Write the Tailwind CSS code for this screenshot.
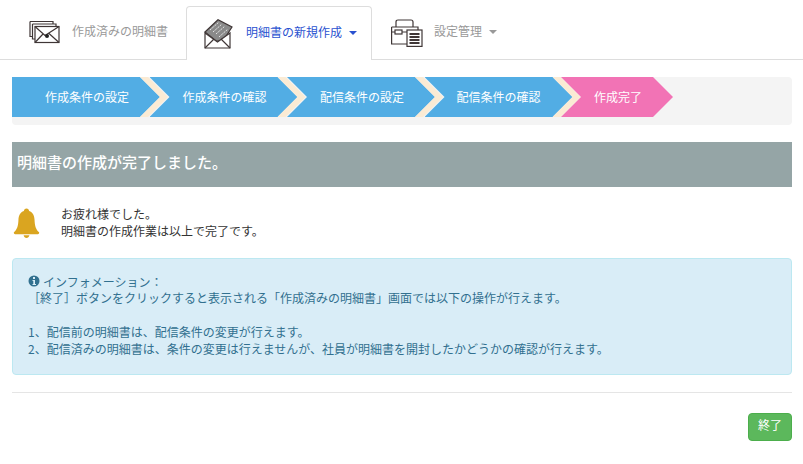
<!DOCTYPE html>
<html lang="ja">
<head>
    <meta charset="UTF-8">
    <title>明細書の新規作成</title>
    <script src="https://cdn.jsdelivr.net/npm/@tailwindcss/browser@4"></script>
</head>
<body class="bg-white text-xs text-[#333] font-['Noto_Sans_CJK_JP','Liberation_Sans',sans-serif]">
    <!-- Tabs -->
    <nav class="flex h-[60px] pl-3 pt-1.5 border-b border-[#ddd]">
        <a href="#" class="flex items-center w-[174px] pl-[17px] pb-1 text-[#999]">
            <svg class="w-[32px] h-[26px] mr-[11px] mt-1" viewBox="0 0 32 26" fill="none" stroke="#3f3636" stroke-width="1.2">
                <path d="M1 1.5H24V4M1 1.5V16.5H3.5"/>
                <path d="M3.5 4H27V6.5M3.5 4V19H6"/>
                <rect x="6" y="6.5" width="24" height="16" fill="#fff"/>
                <path d="M6 6.5L16 15.5 30 6.5M6 22.5L14 14M30 22.5L20 13.5"/>
                <circle cx="18" cy="16" r="2" fill="#222" stroke="none"/>
            </svg>
            作成済みの明細書
        </a>
        <a href="#" class="flex items-center w-[186px] h-[54px] -mb-px pl-[16px] pb-1 bg-white border border-b-0 border-[#ddd] rounded-t text-[#2a52d0]">
            <svg class="w-[30px] h-[30px] mr-[13px] mt-1" viewBox="0 0 30 30" fill="none" stroke="#3f3636" stroke-width="1.2">
                <path d="M2 13L15 0.7 29 8 20 22 13 22Z" fill="#8a8a8a"/>
                <path d="M7 11L16 3M10 13L19 5M13 15L22 7M16 18L25 10" stroke="#e8e8e8" stroke-width="1" stroke-dasharray="2 1"/>
                <path d="M2 14L14.5 23 27 14V29H2Z" fill="#fff"/>
                <path d="M2 29L11 20M27 29L18 20"/>
            </svg>
            明細書の新規作成
            <span class="ml-[7px] mt-0.5 border-x-4 border-x-transparent border-t-4 border-t-[#2a52d0]"></span>
        </a>
        <a href="#" class="flex items-center pl-[19px] pb-1 text-[#999]">
            <svg class="w-[32px] h-[28px] mr-[11px] mt-1" viewBox="0 0 32 28" fill="none" stroke="#3f3636" stroke-width="1.2">
                <path d="M5 8V3Q5 1 7 1H20Q22 1 22 3V8"/>
                <path d="M0.6 8H27V11M16 25H0.6V8"/>
                <path d="M0.6 13H4M11 13H16"/>
                <rect x="4" y="11" width="7" height="4"/>
                <rect x="16" y="11" width="15" height="16.4" fill="#fff"/>
                <path d="M18.5 15H28.5M18.5 18H28.5M18.5 21H28.5M18.5 24H28.5" stroke-width="1.8"/>
            </svg>
            設定管理
            <span class="ml-[7px] mt-0.5 border-x-4 border-x-transparent border-t-4 border-t-[#999]"></span>
        </a>
    </nav>

    <main class="pl-3 pr-[11px]">
        <!-- Steps -->
        <div class="flex h-12 mt-[17px] bg-[#f4f4f4] rounded text-white">
            <div class="relative w-[148px] h-10 shrink-0">
                <div class="flex items-center justify-center h-full pl-0.5 bg-[#52ade4] [clip-path:polygon(0_0,128px_0,148px_50%,128px_100%,0_100%)]">作成条件の設定</div>
                <span class="absolute top-0 left-[128px] w-7 h-10 bg-[#fbebd4] [clip-path:polygon(0_0,8px_0,28px_50%,8px_100%,0_100%,20px_50%)]"></span>
            </div>
            <div class="relative w-[148px] h-10 shrink-0 -ml-[10.5px]">
                <div class="flex items-center justify-center h-full pl-0.5 bg-[#52ade4] [clip-path:polygon(0_0,128px_0,148px_50%,128px_100%,0_100%,20px_50%)]">作成条件の確認</div>
                <span class="absolute top-0 left-[128px] w-7 h-10 bg-[#fbebd4] [clip-path:polygon(0_0,8px_0,28px_50%,8px_100%,0_100%,20px_50%)]"></span>
            </div>
            <div class="relative w-[148px] h-10 shrink-0 -ml-[10.5px]">
                <div class="flex items-center justify-center h-full pl-0.5 bg-[#52ade4] [clip-path:polygon(0_0,128px_0,148px_50%,128px_100%,0_100%,20px_50%)]">配信条件の設定</div>
                <span class="absolute top-0 left-[128px] w-7 h-10 bg-[#fbebd4] [clip-path:polygon(0_0,8px_0,28px_50%,8px_100%,0_100%,20px_50%)]"></span>
            </div>
            <div class="relative w-[148px] h-10 shrink-0 -ml-[10.5px]">
                <div class="flex items-center justify-center h-full bg-[#52ade4] [clip-path:polygon(0_0,128px_0,148px_50%,128px_100%,0_100%,20px_50%)]">配信条件の確認</div>
                <span class="absolute top-0 left-[128px] w-7 h-10 bg-[#fbebd4] [clip-path:polygon(0_0,8px_0,28px_50%,8px_100%,0_100%,20px_50%)]"></span>
            </div>
            <div class="flex items-center justify-center w-[112px] h-10 shrink-0 -ml-[11.5px] pl-0.5 bg-[#f273b5] [clip-path:polygon(0_0,92px_0,112px_50%,92px_100%,0_100%,20px_50%)]">作成完了</div>
        </div>

        <!-- Heading -->
        <h2 class="flex items-center h-[45px] mt-[17px] pl-[5px] pb-1.5 bg-[#95a5a6] text-white text-[15px] font-medium leading-none">明細書の作成が完了しました。</h2>

        <!-- Message -->
        <div class="flex items-center mt-[18px] pl-px">
            <svg class="w-[27px] h-[31px] mr-[21px] mt-0.5" viewBox="0 0 27 32" fill="#daa520">
                <path d="M13.5 0.5C11.8 0.5 11 1.6 10.8 3 7 4.3 5.4 7.8 5.2 12 5 18 4 22 0.5 25 0 26.2 1 27 3 27.2H24C26 27 27 26.2 26.5 25 23 22 22 18 21.8 12 21.6 7.8 20 4.3 16.2 3 16 1.6 15.2 0.5 13.5 0.5Z"/>
                <path d="M10.5 28.2H16.5C16 30 15 31 13.5 31S11 30 10.5 28.2Z"/>
            </svg>
            <p class="leading-[17px]">お疲れ様でした。<br>明細書の作成作業は以上で完了です。</p>
        </div>

        <!-- Information -->
        <div class="h-[117px] mt-[19px] pt-[14px] pl-[15px] bg-[#d9edf7] border border-[#bce8f1] rounded text-[#31708f] leading-[17px]">
            <p class="flex items-center h-4">
                <svg class="w-3 h-3 mr-[3px]" viewBox="0 0 12 12">
                    <circle cx="6" cy="6" r="5.5" fill="#31708f"/>
                    <rect x="5" y="2" width="2" height="2" fill="#d9edf7"/>
                    <path d="M4.5 5H7V9H8V10H4.5V9H5.3V6H4.5Z" fill="#d9edf7"/>
                </svg>
                インフォメーション：
            </p>
            <p>［終了］ボタンをクリックすると表示される「作成済みの明細書」画面では以下の操作が行えます。</p>
            <p class="mt-[17px]">1、配信前の明細書は、配信条件の変更が行えます。</p>
            <p>2、配信済みの明細書は、条件の変更は行えませんが、社員が明細書を開封したかどうかの確認が行えます。</p>
        </div>

        <hr class="mt-[17px] border-[#e5e5e5]">

        <div class="flex justify-end mt-5">
            <button class="w-11 h-7 pb-1 bg-[#5cb85c] border border-[#4cae4c] rounded text-white">終了</button>
        </div>
    </main>
</body>
</html>
